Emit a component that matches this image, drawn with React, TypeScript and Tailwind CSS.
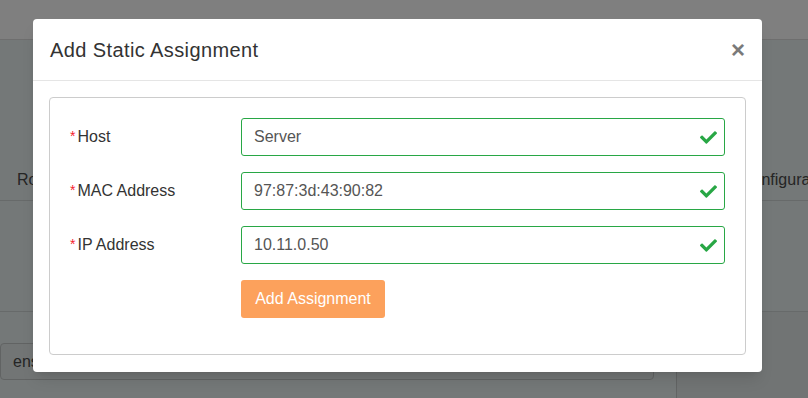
import { FaCheck } from 'react-icons/fa'

const font = { fontFamily: '"Liberation Sans", Arial, sans-serif' }

const fields = [
  { label: 'Host', value: 'Server' },
  { label: 'MAC Address', value: '97:87:3d:43:90:82' },
  { label: 'IP Address', value: '10.11.0.50' },
]

function FormRow({ label, value }: { label: string; value: string }) {
  return (
    <div className="flex items-center h-[38px]">
      {/* Label column */}
      <div className="w-[171px] flex items-center text-[16px] text-[#333]">
        <span className="relative -top-[1px] text-[14px] text-[#f5222d] mr-[2px]">*</span>
        <span>{label}</span>
      </div>
      {/* Validated input */}
      <div className="flex-1 h-[38px] flex items-center justify-between border border-[#28a745] rounded-[3px] pl-[12px] pr-[7px]">
        <span className="text-[16px] text-[#555]">{value}</span>
        <FaCheck size={17} className="text-[#28a745]" />
      </div>
    </div>
  )
}

export default function App() {
  return (
    <div className="relative w-[808px] h-[398px] overflow-hidden bg-[#e9f0f0]" style={font}>
      {/* Page behind the dialog */}
      <div className="h-[40px] bg-white border-b border-[#dddddd]" />

      <div className="mt-[119px] h-[42px] flex items-center border-b border-[#cfd4d4] text-[16px] text-[#4a4a4a]">
        <div className="w-[741px] shrink-0 pl-[17px]">Routes</div>
        <div className="whitespace-nowrap">Configuration</div>
      </div>

      <div className="mt-[110px] flex border-t border-[#cfd4d4] h-[90px]">
        <div className="w-[677px] border-r border-[#c4c9c9] pt-[31px] pr-[22px]">
          <div className="h-[37px] flex items-center border border-[#c2c7c7] rounded-[4px] bg-[#e4eaea] pl-[12px] text-[16px] text-[#4a4a4a]">
            ens192
          </div>
        </div>
        <div className="flex-1 bg-[#e2e9e9]" />
      </div>

      {/* Overlay */}
      <div className="absolute inset-0 bg-black/50" />

      {/* Modal */}
      <div className="absolute left-[33px] top-[19px] w-[729px] h-[353px] bg-white rounded-[4px] shadow-lg flex flex-col">
        <div className="h-[62px] flex items-center justify-between pl-[17px] pr-[17px] border-b border-[#e5e5e5] shrink-0">
          <h1 className="text-[20px] text-[#333] tracking-[0.4px]">Add Static Assignment</h1>
          <span className="text-[24px] font-bold text-[#7a7a7a] leading-none">×</span>
        </div>

        <div className="flex-1 px-[16px] pt-[16px] pb-[17px]">
          <div className="h-full border border-[#cccccc] rounded-[4px] pt-[20px] pl-[20px] pr-[20px] flex flex-col gap-[16px]">
            {fields.map((f) => (
              <FormRow key={f.label} label={f.label} value={f.value} />
            ))}
            <div className="pl-[171px]">
              <button className="h-[38px] w-[144px] bg-[#fca15c] rounded-[3px] text-white text-[16px]">
                Add Assignment
              </button>
            </div>
          </div>
        </div>
      </div>
    </div>
  )
}
